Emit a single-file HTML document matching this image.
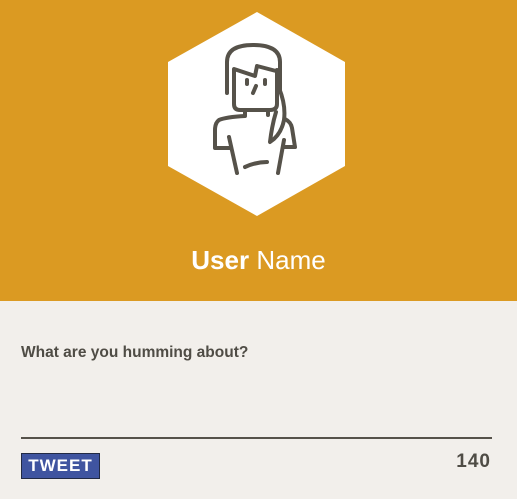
<!DOCTYPE html>
<html><head><style>
body{margin:0;width:517px;height:499px;overflow:hidden;background:#f2efeb;font-family:"Liberation Sans",sans-serif}
.top{position:absolute;left:0;top:0;width:517px;height:301px;background:#db9a22}
.name{position:absolute;top:245px;left:0;width:517px;text-align:center;color:#fff;font-size:26px}
.q{position:absolute;left:21px;top:344px;color:#4f4c45;font-size:15.5px;font-weight:bold}
.line{position:absolute;left:21px;top:437px;width:471px;height:2px;background:#56524a}
.btn{position:absolute;left:21px;top:453px;width:79px;height:26px;background:#3f54a0;border:1px solid #222a44;box-sizing:border-box;color:#fff;font-weight:900;font-size:17px;text-align:center;line-height:24px;letter-spacing:1px}
.cnt{position:absolute;right:26px;top:451px;color:#4f4c45;font-weight:900;font-size:19px;letter-spacing:1px}
</style></head><body>
<div class="top"></div>
<svg style="position:absolute;left:0;top:0" width="517" height="301">
<polygon points="257,12 345,62 345,166 257,216 168,166 168,62" fill="#fff"/>
<g fill="none" stroke="#56524a" stroke-width="4" stroke-linecap="round" stroke-linejoin="round">
<path d="M227,93 V62 Q227,45 253,45 Q280,45 280,62 V90"/>
<path d="M279,88 Q286,105 284,120 Q281,135 270,142 Q272,125 276,112"/>
<path d="M234,70 V104 Q234,110 240,110 H270 Q277,110 277,104 V70"/>
<path d="M234,69 L255,76 L257,66 L276,71"/>
<path d="M247,80 V84 M265,80 V84"/>
<path d="M256,86 L253,93"/>
<path d="M245,110 V116 Q226,117 219,120 Q215,123 215,130 V148 H230 M229,137 L237,173"/>
<path d="M268,110 V115 M285,119 Q291,122 292,128 L295,147 H283 M284,140 L278,173"/>
<path d="M245,167 Q256,162 267,162"/>
</g>
</svg>
<div class="name"><b>User</b> <span style="font-weight:300">Name</span></div>
<div class="q">What are you humming about?</div>
<div class="line"></div>
<div class="btn">TWEET</div>
<div class="cnt">140</div>
</body></html>
